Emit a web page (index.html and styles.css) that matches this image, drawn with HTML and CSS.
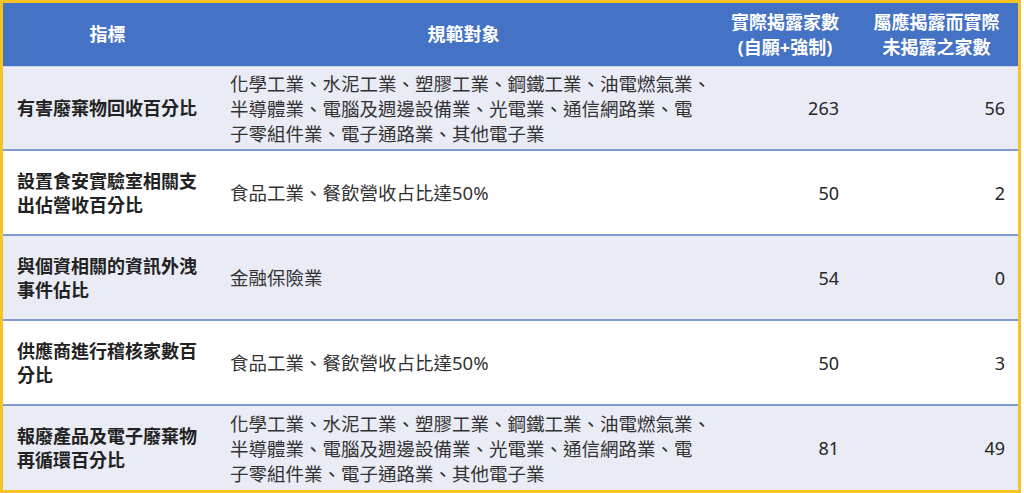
FILE: index.html
```html
<!DOCTYPE html>
<html lang="zh-Hant">
<head>
<meta charset="utf-8">
<link rel="stylesheet" href="styles.css">
</head>
<body>
<div class="frame">
<table class="grid">
  <colgroup>
    <col class="c1"><col class="c2"><col class="c3"><col class="c4">
  </colgroup>
  <thead>
    <tr>
      <th>指標</th>
      <th>規範對象</th>
      <th>實際揭露家數<br>(自願+強制)</th>
      <th>屬應揭露而實際<br>未揭露之家數</th>
    </tr>
  </thead>
  <tbody>
    <tr class="alt">
      <td class="name">有害廢棄物回收百分比</td>
      <td class="scope">化學工業、水泥工業、塑膠工業、鋼鐵工業、油電燃氣業、<br>半導體業、電腦及週邊設備業、光電業、通信網路業、電<br>子零組件業、電子通路業、其他電子業</td>
      <td class="num n3">263</td>
      <td class="num n4">56</td>
    </tr>
    <tr>
      <td class="name">設置食安實驗室相關支<br>出佔營收百分比</td>
      <td class="scope">食品工業、餐飲營收占比達50%</td>
      <td class="num n3">50</td>
      <td class="num n4">2</td>
    </tr>
    <tr class="alt">
      <td class="name">與個資相關的資訊外洩<br>事件佔比</td>
      <td class="scope">金融保險業</td>
      <td class="num n3">54</td>
      <td class="num n4">0</td>
    </tr>
    <tr>
      <td class="name">供應商進行稽核家數百<br>分比</td>
      <td class="scope">食品工業、餐飲營收占比達50%</td>
      <td class="num n3">50</td>
      <td class="num n4">3</td>
    </tr>
    <tr class="alt">
      <td class="name">報廢產品及電子廢棄物<br>再循環百分比</td>
      <td class="scope">化學工業、水泥工業、塑膠工業、鋼鐵工業、油電燃氣業、<br>半導體業、電腦及週邊設備業、光電業、通信網路業、電<br>子零組件業、電子通路業、其他電子業</td>
      <td class="num n3">81</td>
      <td class="num n4">49</td>
    </tr>
  </tbody>
</table>
</div>
</body>
</html>
```

FILE: styles.css
```css
html, body {
  margin: 0;
  padding: 0;
  background: #ffffff;
}

body {
  font-family: "Noto Sans", "Noto Sans CJK TC", sans-serif;
  color: #262626;
}

.frame {
  width: 1015px;
  border: 3px solid #f5c424;
  background: #ffffff;
}

.grid {
  width: 1015px;
  border-collapse: collapse;
  table-layout: fixed;
}

.c1 { width: 209px; }
.c2 { width: 503px; }
.c3 { width: 140px; }
.c4 { width: 163px; }

.grid th {
  background: #4472c4;
  color: #ffffff;
  font-weight: 700;
  font-size: 18px;
  line-height: 25px;
  height: 63px;
  padding: 0 12px;
  text-align: center;
  vertical-align: middle;
  border-bottom: 1px solid #c9d3ea;
}

.grid td {
  height: 83px;
  padding: 0;
  vertical-align: middle;
  border-top: 2px solid #7f9bd2;
}

.grid tbody tr:first-child td {
  border-top: none;
  height: 82px;
}

.grid tbody tr:last-child td {
  height: 84px;
}

.grid tr.alt td {
  background: #e9ebf5;
}

.name {
  font-weight: 700;
  font-size: 18px;
  line-height: 24px;
  padding-left: 14px !important;
  color: #222222;
}

.scope {
  font-size: 18.5px;
  line-height: 25px;
  padding-left: 18px !important;
  color: #333333;
}

.num {
  font-size: 18px;
  text-align: right;
  color: #262626;
}

.n3 { padding-right: 16px !important; }
.n4 { padding-right: 13px !important; }
```
